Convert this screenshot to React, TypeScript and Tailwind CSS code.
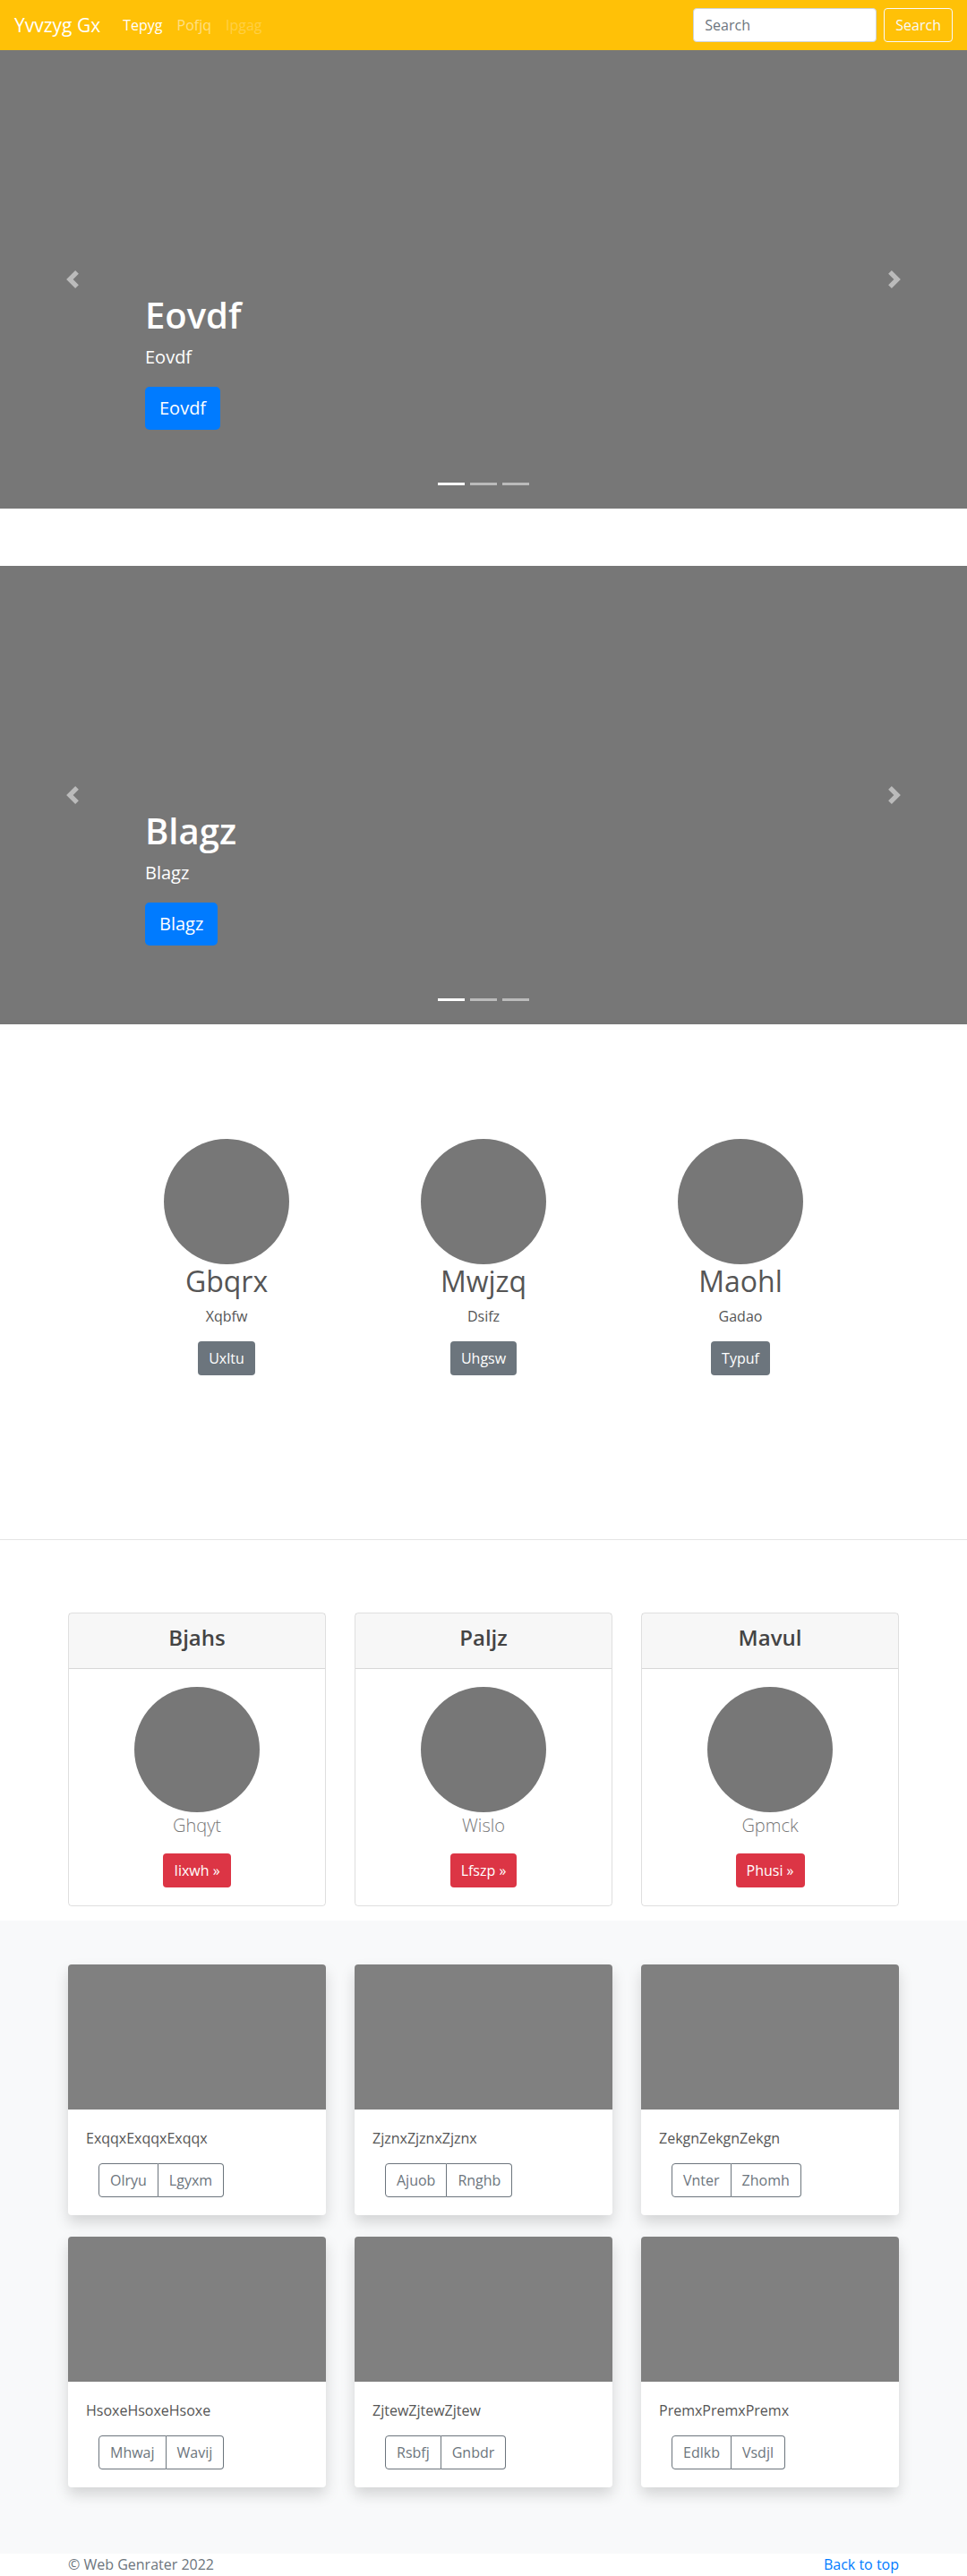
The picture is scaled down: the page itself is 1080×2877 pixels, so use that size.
import type { ReactNode } from 'react';

const font = "font-['Open_Sans','Noto_Sans',sans-serif]";

const marketing = [
  { name: 'Gbqrx', sub: 'Xqbfw', btn: 'Uxltu' },
  { name: 'Mwjzq', sub: 'Dsifz', btn: 'Uhgsw' },
  { name: 'Maohl', sub: 'Gadao', btn: 'Typuf' },
];

const pricing = [
  { title: 'Bjahs', label: 'Ghqyt', btn: 'Iixwh »' },
  { title: 'Paljz', label: 'Wislo', btn: 'Lfszp »' },
  { title: 'Mavul', label: 'Gpmck', btn: 'Phusi »' },
];

const album = [
  { text: 'ExqqxExqqxExqqx', a: 'Olryu', b: 'Lgyxm' },
  { text: 'ZjznxZjznxZjznx', a: 'Ajuob', b: 'Rnghb' },
  { text: 'ZekgnZekgnZekgn', a: 'Vnter', b: 'Zhomh' },
  { text: 'HsoxeHsoxeHsoxe', a: 'Mhwaj', b: 'Wavij' },
  { text: 'ZjtewZjtewZjtew', a: 'Rsbfj', b: 'Gnbdr' },
  { text: 'PremxPremxPremx', a: 'Edlkb', b: 'Vsdjl' },
];

function Chevron({ dir }: { dir: 'prev' | 'next' }) {
  return (
    <svg width="20" height="20" viewBox="0 0 8 8" className="opacity-50">
      {dir === 'prev' ? (
        <path fill="#fff" d="M5.25 0l-4 4 4 4 1.5-1.5L4.25 4l2.5-2.5L5.25 0z" />
      ) : (
        <path fill="#fff" d="M2.75 0l-1.5 1.5L3.75 4l-2.5 2.5L2.75 8l4-4-4-4z" />
      )}
    </svg>
  );
}

function Carousel({ title }: { title: string }) {
  return (
    <div className="relative h-[512px] bg-[#777]">
      {/* caption */}
      <div className="absolute left-[15%] right-[15%] top-[272px] text-white">
        <h1 className="text-[40px] leading-[48px] font-semibold mb-2">{title}</h1>
        <p className="text-[20px] leading-[30px] mb-[18px]">{title}</p>
        <a className="inline-flex items-center h-[48px] px-4 rounded-[5px] bg-[#007bff] text-[20px] text-white">
          {title}
        </a>
      </div>

      {/* controls */}
      <div className="absolute left-0 top-0 h-full w-[15%] flex items-center justify-center">
        <Chevron dir="prev" />
      </div>
      <div className="absolute right-0 top-0 h-full w-[15%] flex items-center justify-center">
        <Chevron dir="next" />
      </div>

      {/* indicators */}
      <div className="absolute bottom-[26px] left-0 right-0 flex justify-center gap-[6px]">
        <span className="w-[30px] h-[3px] bg-white" />
        <span className="w-[30px] h-[3px] bg-white opacity-50" />
        <span className="w-[30px] h-[3px] bg-white opacity-50" />
      </div>
    </div>
  );
}

function OutlineBtn({ children, side }: { children: ReactNode; side: 'l' | 'r' }) {
  return (
    <button
      className={
        side === 'l'
          ? 'h-[38px] px-3 border border-[#6c757d] text-[#6c757d] rounded-l'
          : 'h-[38px] px-3 border border-[#6c757d] border-l-0 text-[#6c757d] rounded-r'
      }
    >
      {children}
    </button>
  );
}

export default function App() {
  return (
    <div className={`${font} bg-white text-[16px] leading-[24px]`}>
      {/* Navbar */}
      <nav className="h-14 bg-[#ffc107] flex items-center px-4">
        <a className="text-[21px] leading-[30px] text-white mr-[17px]">Yvvzyg Gx</a>
        <ul className="flex">
          <li className="px-2 text-white">Tepyg</li>
          <li className="px-2 text-[rgba(255,255,255,0.5)]">Pofjq</li>
          <li className="px-2 text-[rgba(255,255,255,0.25)]">Ipgag</li>
        </ul>
        <form className="ml-auto flex items-center">
          <input
            placeholder="Search"
            className="w-[205px] h-[38px] px-3 bg-white border border-[#ced4da] rounded text-[#495057] placeholder:text-[#6c757d] outline-none"
          />
          <button type="button" className="ml-2 h-[38px] px-3 border border-[#f8f9fa] rounded text-[#f8f9fa]">
            Search
          </button>
        </form>
      </nav>

      <Carousel title="Eovdf" />
      <div className="h-16" />
      <Carousel title="Blagz" />

      {/* Marketing */}
      <div className="pt-[128px]">
        <div className="w-[861px] mx-auto grid grid-cols-3 text-center">
          {marketing.map((m) => (
            <div key={m.name} className="flex flex-col items-center">
              <div className="w-[140px] h-[140px] rounded-full bg-[#777]" />
              <h2 className="text-[32px] leading-[38px] text-[#555] mb-2">{m.name}</h2>
              <p className="text-[#555] mb-4">{m.sub}</p>
              <button className="h-[38px] px-3 rounded bg-[#6c757d] text-white">{m.btn}</button>
            </div>
          ))}
        </div>
      </div>

      <hr className="mt-[183px] border-0 border-t border-[rgba(0,0,0,0.1)]" />

      {/* Pricing */}
      <div className="w-[928px] mx-auto mt-[81px] mb-4 grid grid-cols-3 gap-8 text-center">
        {pricing.map((p) => (
          <div key={p.title} className="border border-[rgba(0,0,0,0.125)] rounded">
            <div className="bg-[rgba(0,0,0,0.03)] border-b border-[rgba(0,0,0,0.125)] py-3 px-5">
              <h4 className="text-[24px] leading-[29px] font-semibold text-[#444] mb-2">{p.title}</h4>
            </div>
            <div className="p-5 flex flex-col items-center">
              <div className="w-[140px] h-[140px] rounded-full bg-[#777]" />
              <p className="text-[20px] leading-[30px] font-light text-[#777] mb-4">{p.label}</p>
              <button className="h-[38px] px-3 rounded bg-[#dc3545] text-white">{p.btn}</button>
            </div>
          </div>
        ))}
      </div>

      {/* Album */}
      <div className="bg-[#f8f9fa] pt-[49px] pb-[74px]">
        <div className="w-[928px] mx-auto grid grid-cols-3 gap-x-8 gap-y-6">
          {album.map((c) => (
            <div key={c.text} className="bg-white rounded overflow-hidden shadow-[0_8px_16px_rgba(0,0,0,0.15)]">
              <div className="h-[162px] bg-[#808080]" />
              <div className="p-5">
                <p className="text-[#555] mb-4">{c.text}</p>
                <div className="inline-flex ml-[14px]">
                  <OutlineBtn side="l">{c.a}</OutlineBtn>
                  <OutlineBtn side="r">{c.b}</OutlineBtn>
                </div>
              </div>
            </div>
          ))}
        </div>
      </div>

      {/* Footer */}
      <footer className="h-6">
        <div className="w-[928px] mx-auto flex justify-between">
          <p className="text-[#6c757d]">© Web Genrater 2022</p>
          <a className="text-[#007bff]">Back to top</a>
        </div>
      </footer>
    </div>
  );
}
